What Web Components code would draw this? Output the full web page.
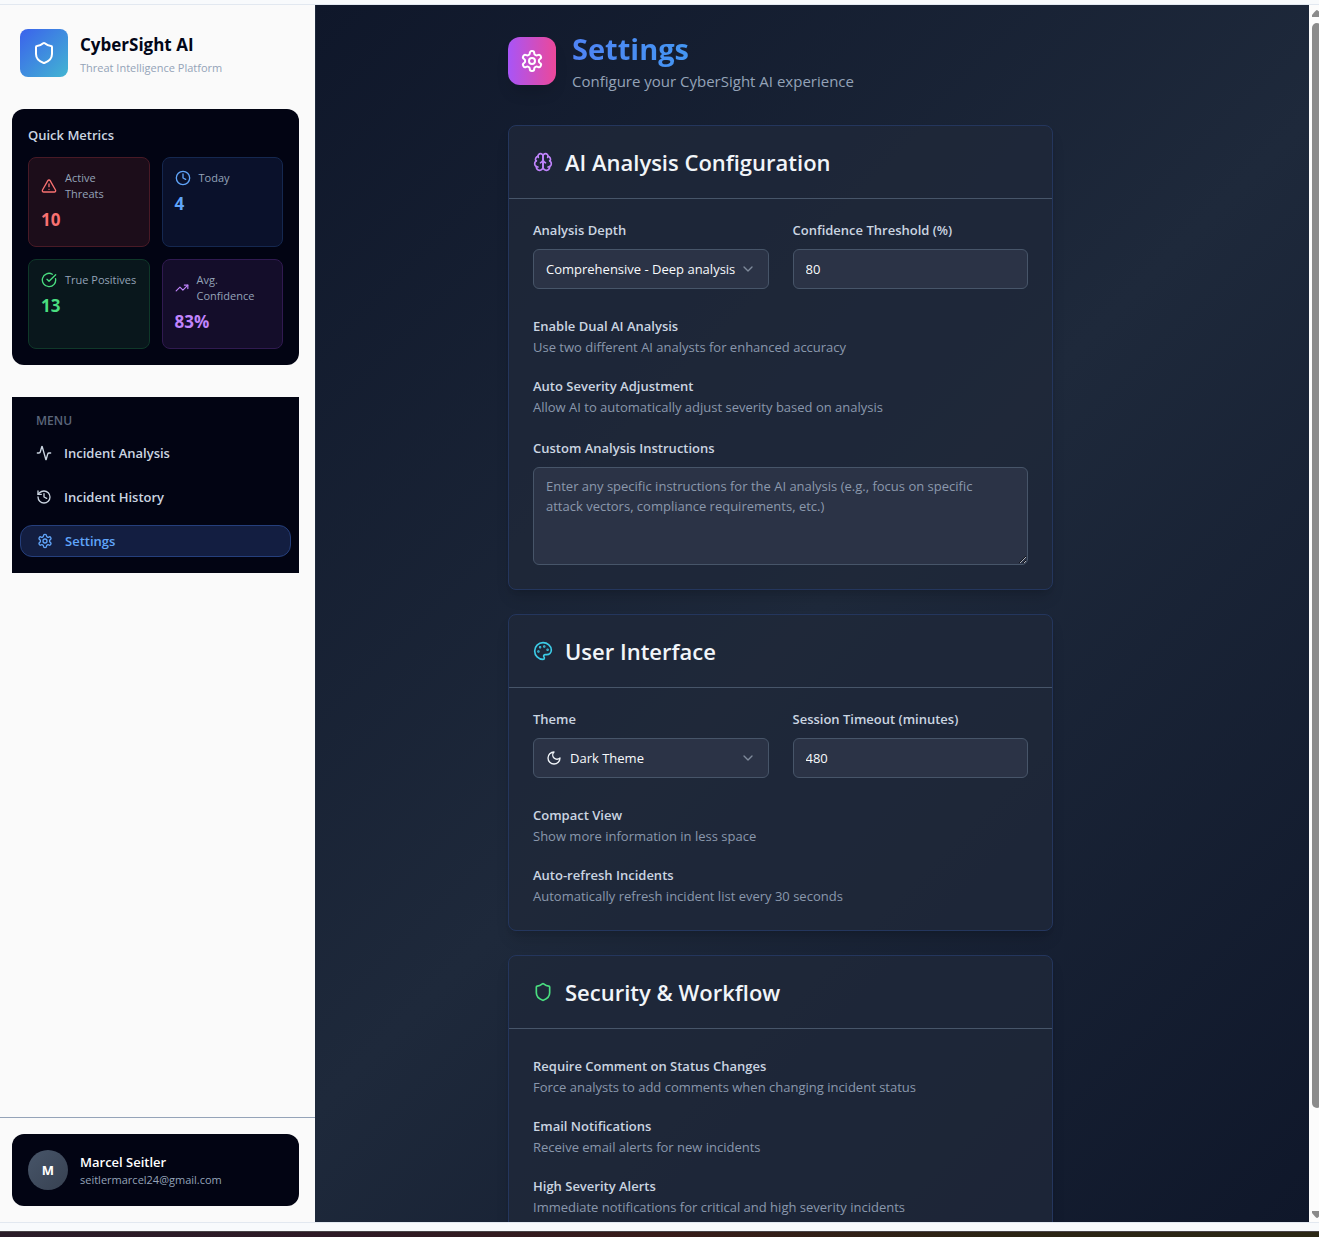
<!DOCTYPE html>
<html lang="en">
<head>
<meta charset="utf-8">
<title>CyberSight AI - Settings</title>
<style>
  html, body { margin: 0; height: 100%; }
  body { font-family: "Segoe UI", "Open Sans", "Noto Sans", sans-serif; background: #f8fafc; overflow: hidden; }
</style>
</head>
<body>
<cyber-app></cyber-app>
<script>
const ICONS = {
  shield: '<path d="M20 13c0 5-3.5 7.5-7.66 8.95a1 1 0 0 1-.67-.01C7.5 20.5 4 18 4 13V6a1 1 0 0 1 1-1c2 0 4.5-1.2 6.24-2.72a1.17 1.17 0 0 1 1.52 0C14.51 3.81 17 5 19 5a1 1 0 0 1 1 1z"/>',
  settings: '<path d="M12.22 2h-.44a2 2 0 0 0-2 2v.18a2 2 0 0 1-1 1.73l-.43.25a2 2 0 0 1-2 0l-.15-.08a2 2 0 0 0-2.73.73l-.22.38a2 2 0 0 0 .73 2.73l.15.1a2 2 0 0 1 1 1.72v.51a2 2 0 0 1-1 1.74l-.15.09a2 2 0 0 0-.73 2.73l.22.38a2 2 0 0 0 2.73.73l.15-.08a2 2 0 0 1 2 0l.43.25a2 2 0 0 1 1 1.73V20a2 2 0 0 0 2 2h.44a2 2 0 0 0 2-2v-.18a2 2 0 0 1 1-1.73l.43-.25a2 2 0 0 1 2 0l.15.08a2 2 0 0 0 2.73-.73l.22-.39a2 2 0 0 0-.73-2.73l-.15-.08a2 2 0 0 1-1-1.74v-.5a2 2 0 0 1 1-1.74l.15-.09a2 2 0 0 0 .73-2.73l-.22-.38a2 2 0 0 0-2.73-.73l-.15.08a2 2 0 0 1-2 0l-.43-.25a2 2 0 0 1-1-1.73V4a2 2 0 0 0-2-2z"/><circle cx="12" cy="12" r="3"/>',
  brain: '<path d="M12 5a3 3 0 1 0-5.997.125 4 4 0 0 0-2.526 5.77 4 4 0 0 0 .556 6.588A4 4 0 1 0 12 18Z"/><path d="M12 5a3 3 0 1 1 5.997.125 4 4 0 0 1 2.526 5.77 4 4 0 0 1-.556 6.588A4 4 0 1 1 12 18Z"/><path d="M15 13a4.5 4.5 0 0 1-3-4 4.5 4.5 0 0 1-3 4"/><path d="M17.599 6.5a3 3 0 0 0 .399-1.375"/><path d="M6.003 5.125A3 3 0 0 0 6.401 6.5"/><path d="M3.477 10.896a4 4 0 0 1 .585-.396"/><path d="M19.938 10.5a4 4 0 0 1 .585.396"/><path d="M6 18a4 4 0 0 1-1.967-.516"/><path d="M19.967 17.484A4 4 0 0 1 18 18"/>',
  palette: '<circle cx="13.5" cy="6.5" r=".5" fill="currentColor"/><circle cx="17.5" cy="10.5" r=".5" fill="currentColor"/><circle cx="8.5" cy="7.5" r=".5" fill="currentColor"/><circle cx="6.5" cy="12.5" r=".5" fill="currentColor"/><path d="M12 2C6.5 2 2 6.5 2 12s4.5 10 10 10c.926 0 1.648-.746 1.648-1.688 0-.437-.18-.835-.437-1.125-.29-.289-.438-.652-.438-1.125a1.64 1.64 0 0 1 1.668-1.668h1.996c3.051 0 5.555-2.503 5.555-5.554C21.965 6.012 17.461 2 12 2z"/>',
  moon: '<path d="M12 3a6 6 0 0 0 9 9 9 9 0 1 1-9-9Z"/>',
  chevron: '<path d="m6 9 6 6 6-6"/>',
  alert: '<path d="m21.73 18-8-14a2 2 0 0 0-3.48 0l-8 14A2 2 0 0 0 4 21h16a2 2 0 0 0 1.73-3"/><path d="M12 9v4"/><path d="M12 17h.01"/>',
  clock: '<circle cx="12" cy="12" r="10"/><path d="M12 6v6l4 2"/>',
  check: '<path d="M21.801 10A10 10 0 1 1 17 3.335"/><path d="m9 11 3 3L22 4"/>',
  trend: '<path d="m22 7-8.5 8.5-5-5L2 17"/><path d="M16 7h6v6"/>',
  activity: '<path d="M22 12h-2.48a2 2 0 0 0-1.93 1.46l-2.35 8.36a.25.25 0 0 1-.48 0L9.24 2.18a.25.25 0 0 0-.48 0l-2.35 8.36A2 2 0 0 1 4.49 12H2"/>',
  history: '<path d="M3 12a9 9 0 1 0 9-9 9.75 9.75 0 0 0-6.74 2.74L3 8"/><path d="M3 3v5h5"/><path d="M12 7v5l4 2"/>'
};

const define = (name, render) => customElements.define(name, class extends HTMLElement {
  connectedCallback() {
    if (this.shadowRoot) return;
    this.attachShadow({ mode: 'open' }).innerHTML = '<style>*{box-sizing:border-box}</style>' + render(k => this.getAttribute(k) || '', this);
  }
});

define('ui-icon', a => `
  <style>:host{display:block;width:var(--icon,16px);flex:0 1 auto}svg{display:block;width:100%;height:auto}</style>
  <svg viewBox="0 0 24 24" fill="none" stroke="currentColor" stroke-width="2" stroke-linecap="round" stroke-linejoin="round" aria-hidden="true">${ICONS[a('name')]}</svg>`);

define('brand-header', () => `
  <style>
    :host{display:flex;align-items:center;gap:12px;padding:24px 20px 32px}
    .logo{width:48px;height:48px;border-radius:8px;background:linear-gradient(135deg,#3b62ec,#42b5d2);color:#fff;display:grid;place-items:center;--icon:24px}
    h2{margin:0;font-size:17px;line-height:30px;font-weight:700;color:#020617}
    p{margin:0;font-size:11px;line-height:16px;color:#94a3b8}
  </style>
  <div class="logo"><ui-icon name="shield"></ui-icon></div>
  <div><h2>CyberSight AI</h2><p>Threat Intelligence Platform</p></div>`);

define('metric-tile', a => `
  <style>
    :host{display:block;padding:12px;border:1px solid var(--edge);border-radius:8px;background:var(--fill);color:var(--tone)}
    .top{display:flex;align-items:center;gap:8px;margin-bottom:4px}
    .label{font-size:11px;line-height:16px;color:#94a3b8}
    .value{font-size:17px;line-height:28px;font-weight:700}
  </style>
  <div class="top"><ui-icon name="${a('icon')}"></ui-icon><span class="label"><slot></slot></span></div>
  <div class="value">${a('value')}</div>`);

define('quick-metrics', () => `
  <style>
    :host{display:block;margin:0 16px 32px 12px;padding:16px;border-radius:12px;background:#020413}
    h3{margin:0 0 12px;font-size:13px;line-height:20px;font-weight:600;color:#cbd5e1}
    .grid{display:grid;grid-template-columns:1fr 1fr;gap:12px}
    .red{--tone:#f87171;--fill:#1c0d1a;--edge:#481a26}
    .blue{--tone:#60a5fa;--fill:#0a112b;--edge:#152850}
    .green{--tone:#4ade80;--fill:#09171c;--edge:#0f3829}
    .purple{--tone:#c084fc;--fill:#140d2a;--edge:#301a50;--icon:14px}
  </style>
  <h3>Quick Metrics</h3>
  <div class="grid">
    <metric-tile class="red" icon="alert" value="10">Active<br>Threats</metric-tile>
    <metric-tile class="blue" icon="clock" value="4">Today</metric-tile>
    <metric-tile class="green" icon="check" value="13">True Positives</metric-tile>
    <metric-tile class="purple" icon="trend" value="83%">Avg.<br>Confidence</metric-tile>
  </div>`);

define('nav-item', (a, el) => `
  <style>
    a{display:flex;align-items:center;gap:12px;height:32px;padding:0 16px;border-radius:12px;font-size:13px;line-height:20px;font-weight:600;color:#cbd5e1;text-decoration:none}
    :host{display:block}
    :host([active]) a{border:1px solid #253f7c;background:#131e41;color:#60a5fa}
  </style>
  <a href="#${a('icon')}" ${el.hasAttribute('active') ? 'aria-current="page"' : ''}><ui-icon name="${a('icon')}"></ui-icon><slot></slot></a>`);

define('side-menu', () => `
  <style>
    :host{display:block;margin:0 16px 0 12px;padding:8px 8px 16px;background:#020413}
    .cap{padding:0 16px;font-size:12px;line-height:32px;font-weight:600;color:#5b667a}
    nav{display:grid;gap:12px}
  </style>
  <div class="cap">MENU</div>
  <nav>
    <nav-item icon="activity">Incident Analysis</nav-item>
    <nav-item icon="history">Incident History</nav-item>
    <nav-item icon="settings" active>Settings</nav-item>
  </nav>`);

define('user-card', () => `
  <style>
    :host{display:block;margin-top:auto;border-top:1px solid #94a3b8;padding:16px 16px 16px 12px}
    .card{display:flex;align-items:center;gap:12px;padding:16px;border-radius:12px;background:#020413}
    .avatar{width:40px;height:40px;border-radius:50%;display:grid;place-items:center;background:linear-gradient(135deg,#475569,#374151);color:#fff;font-size:13px;font-weight:700}
    .name{font-size:13px;line-height:20px;font-weight:600;color:#fff}
    .mail{font-size:11px;line-height:16px;color:#94a3b8}
  </style>
  <div class="card"><div class="avatar">M</div><div><div class="name">Marcel Seitler</div><div class="mail">seitlermarcel24@gmail.com</div></div></div>`);

define('page-heading', () => `
  <style>
    :host{display:flex;align-items:center;gap:16px}
    .badge{width:48px;height:48px;border-radius:12px;background:linear-gradient(90deg,#a855f7,#ec4899);color:#fff;display:grid;place-items:center;--icon:24px;box-shadow:0 10px 15px -3px #0002}
    .words{flex:1}
    h1{margin:0;font-size:29px;line-height:40px;font-weight:700;background:linear-gradient(90deg,#4f83f5,#22d3ee);background-clip:text;-webkit-background-clip:text;color:transparent}
    p{margin:0;font-size:15px;line-height:24px;color:#94a3b8}
  </style>
  <div class="badge"><ui-icon name="settings"></ui-icon></div>
  <div class="words"><h1>Settings</h1><p>Configure your CyberSight AI experience</p></div>`);

define('settings-card', a => `
  <style>
    :host{display:block;border:1px solid #24365d;border-radius:8px;background:#1f2839cc;box-shadow:0 10px 15px -3px #0002,0 4px 6px -4px #0002}
    header{display:flex;align-items:center;gap:12px;padding:24px;border-bottom:1px solid #475569;--icon:20px}
    ui-icon{color:${a('tone')}}
    h2{margin:0;font-size:22px;line-height:24px;font-weight:600;color:#f1f5f9}
    .body{display:grid;gap:24px;padding:24px}
  </style>
  <header><ui-icon name="${a('icon')}"></ui-icon><h2>${a('heading').replace('&', '&amp;')}</h2></header>
  <div class="body"><slot></slot></div>`);

define('field-row', () => `
  <style>:host{display:grid;grid-template-columns:1fr 1fr;gap:24px}</style><slot></slot>`);

define('settings-field', a => {
  const kind = a('kind');
  const control = {
    select: () => `<div class="pick ${a('icon') ? 'with-icon' : ''}"><select id="c"><option>${a('value')}</option></select>${a('icon') ? `<ui-icon class="lead" name="${a('icon')}"></ui-icon>` : ''}<ui-icon class="arrow" name="chevron"></ui-icon></div>`,
    number: () => `<input id="c" type="text" inputmode="numeric" value="${a('value')}">`,
    area: () => `<textarea id="c" placeholder="${a('value')}"></textarea>`
  }[kind]();
  return `
  <style>
    :host{display:flex;flex-direction:column;gap:12px;min-width:0}
    label{font-size:13px;line-height:14px;font-weight:600;color:#cbd5e1}
    select,input,textarea{display:block;width:100%;margin:0;border:1px solid #475569;border-radius:6px;background:#2b3346;color:#f8fafc;font-family:inherit;font-size:13px;line-height:20px;font-weight:500;outline:0}
    select,input{height:40px;padding:0 12px}
    select{appearance:none;padding-right:24px}
    textarea{height:98px;padding:8px 24px 8px 12px;resize:vertical;font-weight:400}
    textarea::placeholder{color:#8b99ad;opacity:1}
    .pick{display:grid;align-items:center}
    .pick>*{grid-area:1/1}
    .pick ui-icon{pointer-events:none}
    .arrow{justify-self:end;margin-right:13px;color:#7f8a9b}
    .lead{margin-left:13px;color:#f1f5f9}
    .with-icon select{padding-left:36px}
  </style>
  <label for="c">${a('label')}</label>${control}`;
});

define('option-note', a => `
  <style>
    :host{display:block;padding-top:2px}
    h3{margin:0;font-size:13px;line-height:22px;font-weight:600;color:#cbd5e1}
    p{margin:0;font-size:13px;line-height:20px;color:#8a98ad}
  </style>
  <h3>${a('heading')}</h3><p><slot></slot></p>`);

define('option-list', () => `<style>:host{display:grid;gap:16px}</style><slot></slot>`);

define('settings-page', () => `
  <style>
    :host{display:grid;grid-template-columns:192fr 545fr 256fr;align-items:start;overflow:hidden;background:linear-gradient(135deg,#0f172a,#1e293b 50%,#0f172a)}
    main{grid-column:2;display:grid;gap:24px;padding:24px 0}
    page-heading{margin-bottom:8px}
  </style>
  <main>
    <page-heading></page-heading>
    <settings-card icon="brain" tone="#c084fc" heading="AI Analysis Configuration">
      <field-row>
        <settings-field kind="select" label="Analysis Depth" value="Comprehensive - Deep analysis"></settings-field>
        <settings-field kind="number" label="Confidence Threshold (%)" value="80"></settings-field>
      </field-row>
      <option-list>
        <option-note heading="Enable Dual AI Analysis">Use two different AI analysts for enhanced accuracy</option-note>
        <option-note heading="Auto Severity Adjustment">Allow AI to automatically adjust severity based on analysis</option-note>
      </option-list>
      <settings-field kind="area" label="Custom Analysis Instructions" value="Enter any specific instructions for the AI analysis (e.g., focus on specific attack vectors, compliance requirements, etc.)"></settings-field>
    </settings-card>
    <settings-card icon="palette" tone="#3ccbe6" heading="User Interface">
      <field-row>
        <settings-field kind="select" icon="moon" label="Theme" value="Dark Theme"></settings-field>
        <settings-field kind="number" label="Session Timeout (minutes)" value="480"></settings-field>
      </field-row>
      <option-list>
        <option-note heading="Compact View">Show more information in less space</option-note>
        <option-note heading="Auto-refresh Incidents">Automatically refresh incident list every 30 seconds</option-note>
      </option-list>
    </settings-card>
    <settings-card icon="shield" tone="#4ade80" heading="Security &amp; Workflow">
      <option-list>
        <option-note heading="Require Comment on Status Changes">Force analysts to add comments when changing incident status</option-note>
        <option-note heading="Email Notifications">Receive email alerts for new incidents</option-note>
        <option-note heading="High Severity Alerts">Immediate notifications for critical and high severity incidents</option-note>
      </option-list>
    </settings-card>
  </main>`);

define('scroll-rail', () => `
  <style>
    :host{display:flex;flex-direction:column;align-items:flex-start;gap:6px;width:10px;padding:5px 0 4px 3px;background:#fcfcfc;overflow:hidden}
    svg{display:block;flex:none;width:10px;height:7px;fill:#8b8b8b}
    .thumb{width:10px;flex:1;margin-bottom:97px;border-radius:5px;background:#8b8b8b}
  </style>
  <svg viewBox="0 0 10 7"><path d="M5 0 Q6 0 10 5 V7 H0 V5 Q4 0 5 0Z"/></svg>
  <div class="thumb"></div>
  <svg viewBox="0 0 10 7"><path d="M5 7 Q6 7 10 2 V0 H0 V2 Q4 7 5 7Z"/></svg>`);

define('cyber-app', () => `
  <style>
    :host{display:flex;flex-direction:column;height:100vh;background:#f8fafc}
    .top{height:5px;border-bottom:1px solid #e2e8f0}
    .window{flex:1;min-height:0;display:flex}
    aside{flex:none;width:316px;display:flex;flex-direction:column;background:#fafafa;border-right:1px solid #1e293b}
    settings-page{flex:1;min-width:0}
    .bottom{height:9px;border-top:1px solid #e2e8f0}
    .desk{height:6px;background:linear-gradient(90deg,#2a1c28,#2e1a26 25%,#381c1a 50%,#2c2414 75%,#2c2815);border-top:1px solid #4a4548}
  </style>
  <div class="top"></div>
  <div class="window">
    <aside><brand-header></brand-header><quick-metrics></quick-metrics><side-menu></side-menu><user-card></user-card></aside>
    <settings-page></settings-page>
    <scroll-rail></scroll-rail>
  </div>
  <div class="bottom"></div>
  <div class="desk"></div>`);
</script>
</body>
</html>
